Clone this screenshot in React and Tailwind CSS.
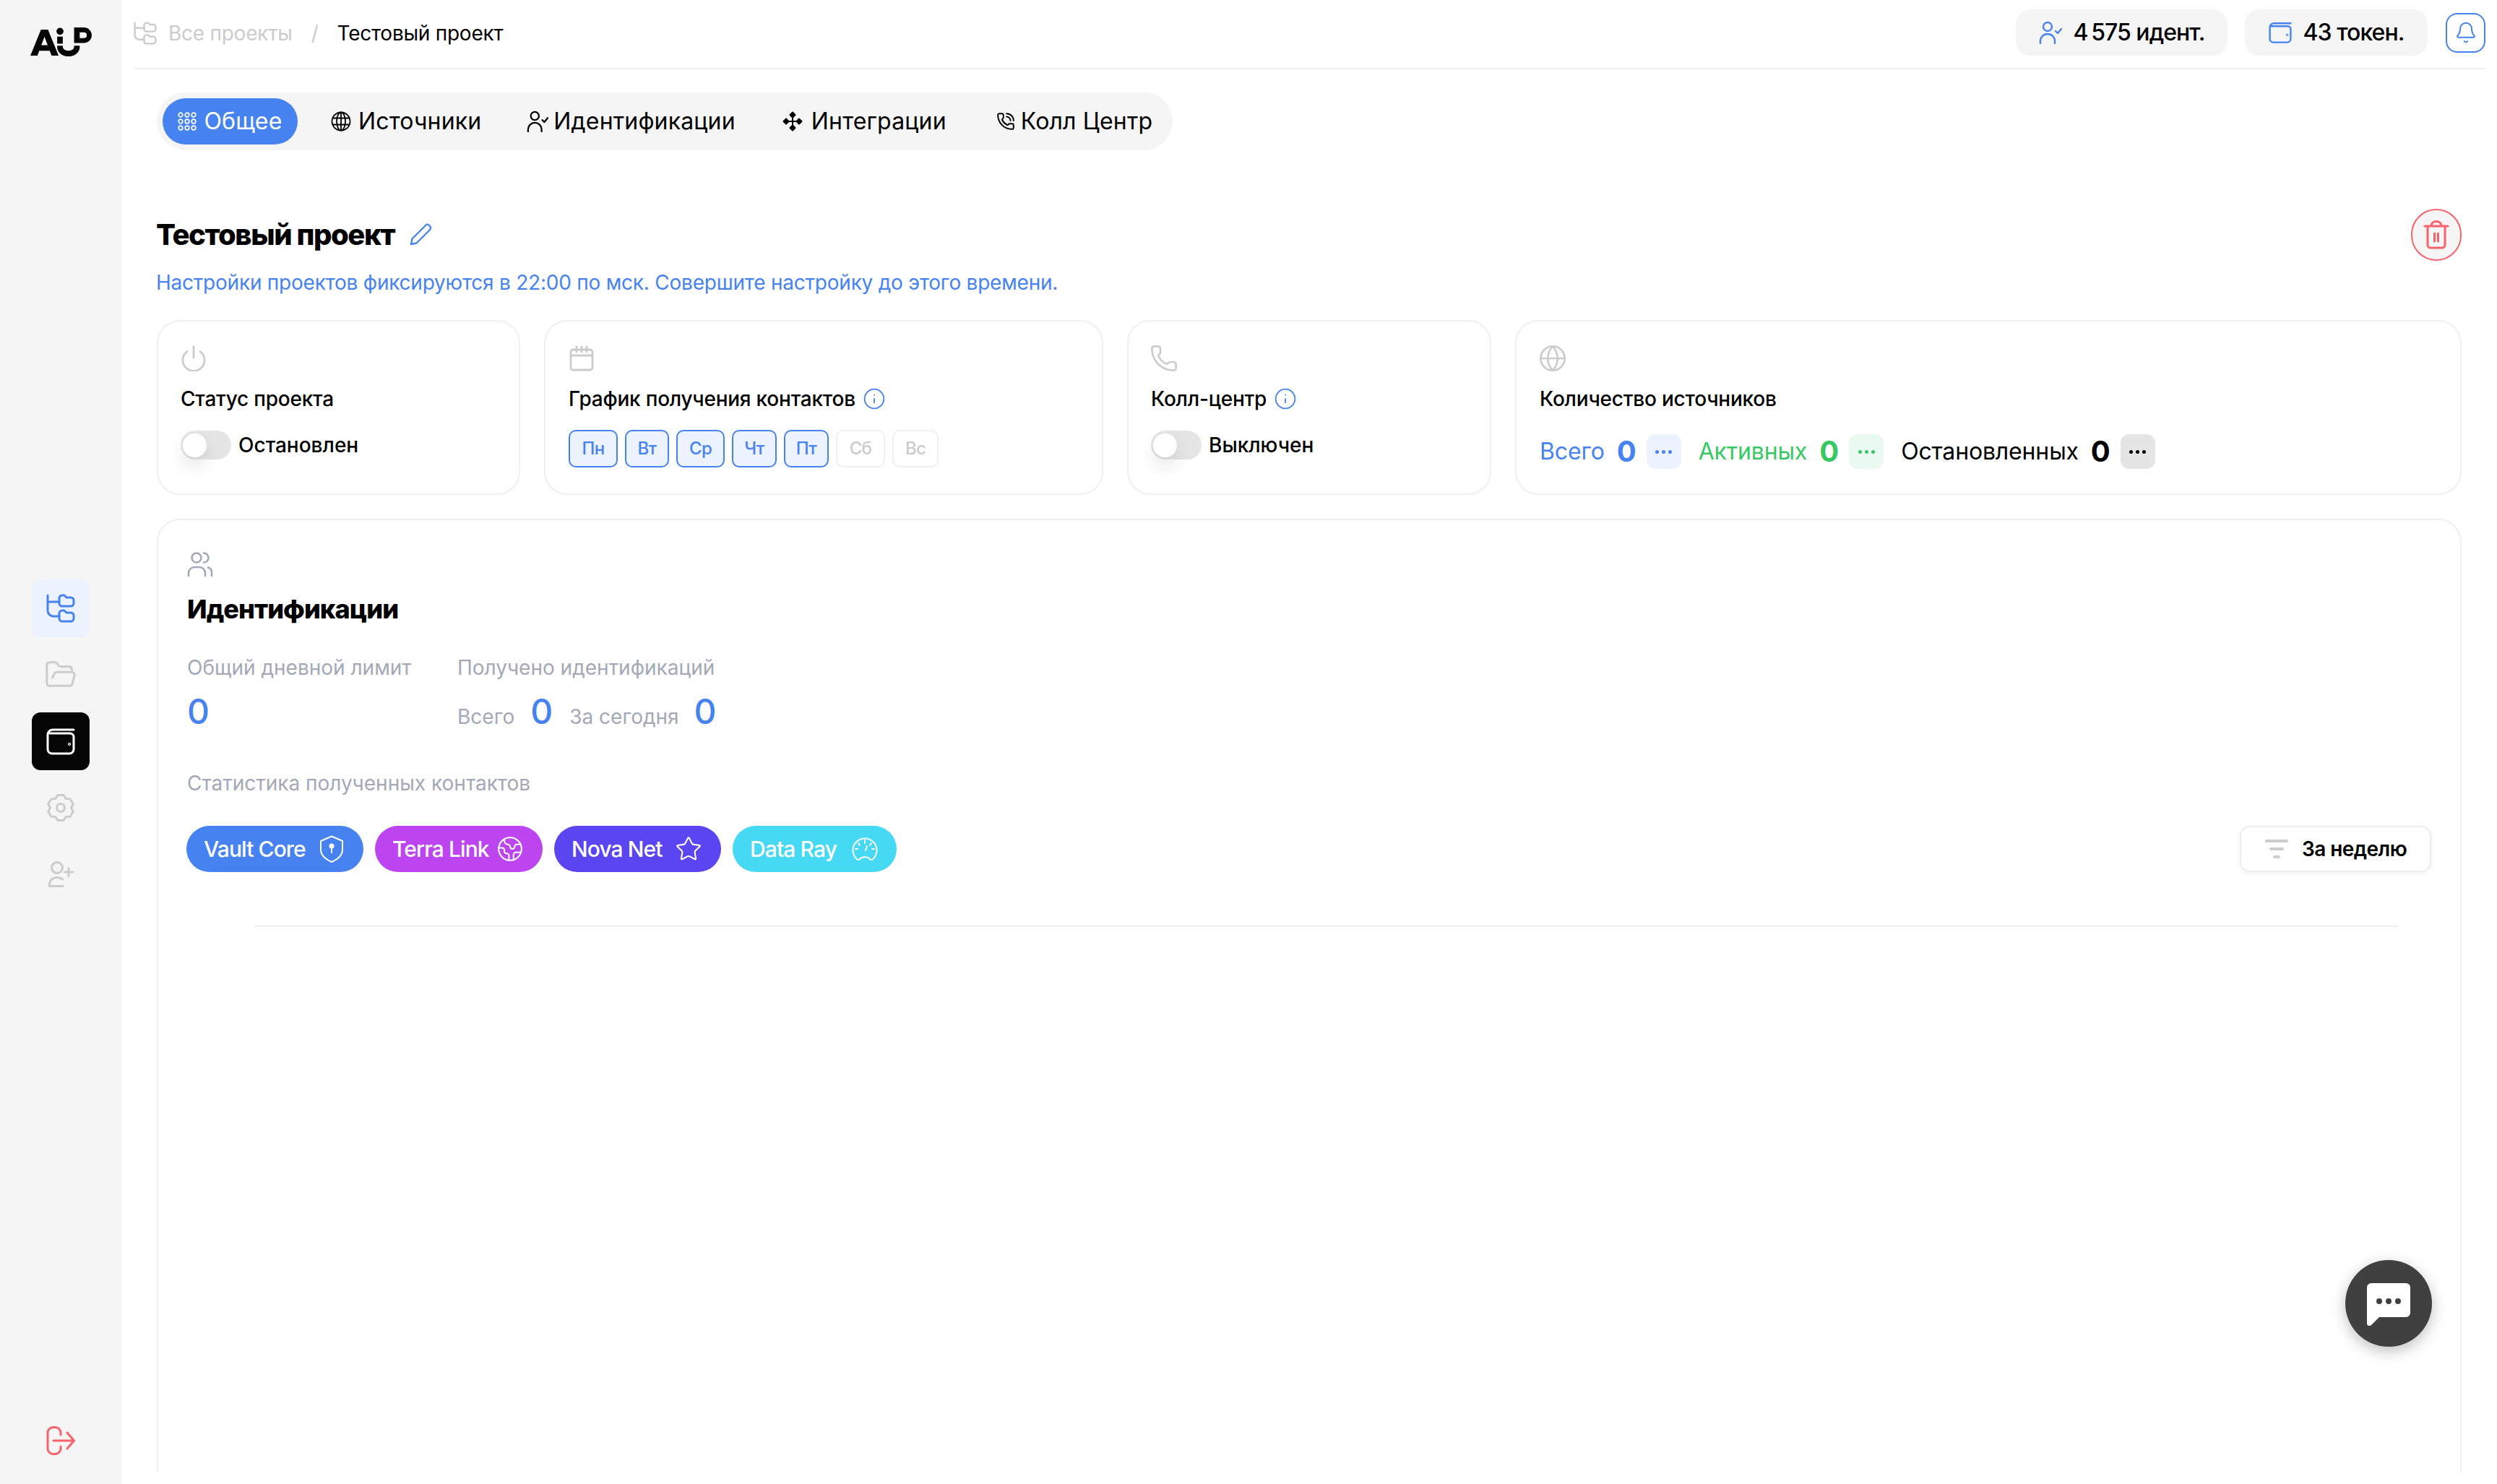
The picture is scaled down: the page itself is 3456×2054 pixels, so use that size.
import React from "react";
import { Bell, Earth, FolderOpen, Globe, Info, Phone, PhoneCall, Star } from "lucide-react";

const Logo = () => (
  <svg width="87" height="40" viewBox="0 0 87 41" fill="#050505">
    <path fillRule="evenodd" d="M0 40 15 3h10l15 37H30l-2.6-7H12.6L10 40ZM15.500 25h9L20 13Z" />
    <circle cx="42" cy="5.500" r="5" />
    <rect x="38" y="13" width="8" height="10" />
    <path d="M42 26v2a12 9 0 0 0 24 0v-2" fill="none" stroke="#050505" strokeWidth="8" />
    <path fillRule="evenodd" d="M62 0h14a11 11 0 0 1 0 22H62Zm8 7v8h6a4 4 0 0 0 0-8Z" />
  </svg>
);

const TreeIcon = ({ className }) => (
  <svg className={className} viewBox="0 0 40 40" fill="none" stroke="currentColor" strokeWidth="3" strokeLinecap="round" strokeLinejoin="round">
    <path d="M2 2v21a8 8 0 0 0 8 8h8M2 11h16" />
    <path d="M18 6a4 4 0 0 1 4-4h3l3 3h6a4 4 0 0 1 4 4v4a4 4 0 0 1-4 4H22a4 4 0 0 1-4-4Z" />
    <path d="M18 27a4 4 0 0 1 4-4h3l3 3h6a4 4 0 0 1 4 4v4a4 4 0 0 1-4 4H22a4 4 0 0 1-4-4Z" />
  </svg>
);

const WalletIcon = ({ className }) => (
  <svg className={className} viewBox="0 0 40 40" fill="none" stroke="currentColor" strokeWidth="3" strokeLinecap="round" strokeLinejoin="round">
    <path d="M38 4H9a7 7 0 0 0-7 7v20a6 6 0 0 0 6 6h24a6 6 0 0 0 6-6V14a5 5 0 0 0-5-5H5" />
    <circle cx="32" cy="24" r="0.6" fill="currentColor" />
  </svg>
);

const gearPoints = Array.from({ length: 6 }, (_, i) => {
  const a = (-90 + i * 60) * (Math.PI / 180);
  const d = 13 * (Math.PI / 180);
  const pt = (r, t) => `${(r * Math.cos(t)).toFixed(2)},${(r * Math.sin(t)).toFixed(2)}`;
  return [pt(18, a - d), pt(18, a + d), pt(14.5, a + Math.PI / 6)].join(" ");
}).join(" ");

const GearIcon = ({ className }) => (
  <svg className={className} viewBox="-20 -20 40 40" fill="none" stroke="currentColor" strokeWidth="3" strokeLinejoin="round">
    <polygon points={gearPoints} />
    <circle cx="0" cy="0" r="5.500" />
  </svg>
);

const UserPlusIcon = ({ className }) => (
  <svg className={className} viewBox="0 0 40 40" fill="none" stroke="currentColor" strokeWidth="3" strokeLinecap="round" strokeLinejoin="round">
    <circle cx="15" cy="11" r="7.500" />
    <path d="M4.500 36.500c-1-7 4-12 10.500-12 3 0 5.500.8 7.500 2.500M4.500 36.500H23" />
    <path d="M31 11.500v11M25.500 17h11" />
  </svg>
);

const LogoutIcon = ({ className }) => (
  <svg className={className} viewBox="0 0 40 40" fill="none" stroke="currentColor" strokeWidth="3" strokeLinecap="round" strokeLinejoin="round">
    <path d="M20 12V9a7.500 7.500 0 0 0-7.500-7.500h-3A7.500 7.500 0 0 0 2 9v22a7.500 7.500 0 0 0 7.500 7.500h3A7.500 7.500 0 0 0 20 31v-3" />
    <path d="M10 20h28M29 9l9.500 11L29 31" />
  </svg>
);

const GridDots = () => (
  <svg width="26" height="26" viewBox="0 0 26 26" fill="none" stroke="white" strokeWidth="1.700">
    {[4, 13, 22].map((y) => [4, 13, 22].map((x) => <circle key={x + "-" + y} cx={x} cy={y} r="2.800" />))}
  </svg>
);

const GlobeLines = () => (
  <svg width="28" height="28" viewBox="0 0 28 28" fill="none" stroke="black" strokeWidth="1.800">
    <circle cx="14" cy="14" r="12.500" />
    <ellipse cx="14" cy="14" rx="6" ry="12.500" />
    <path d="M14 1.500v25M2.500 9.500h23M2.500 18.500h23" />
  </svg>
);

const UserCheckIcon = ({ className }) => (
  <svg className={className} viewBox="0 0 32 32" fill="none" stroke="currentColor" strokeWidth="2.400" strokeLinecap="round" strokeLinejoin="round">
    <circle cx="12" cy="8" r="6" />
    <path d="M2 31v-3a10 10 0 0 1 20 0v3M23 14l3 3 5-6" />
  </svg>
);

const IntegrationIcon = () => (
  <svg width="30" height="30" viewBox="0 0 30 30" fill="none" stroke="black" strokeWidth="2" strokeLinejoin="round">
    <path d="M15 2.500 18.500 6 15 9.500 11.500 6Z M15 20.500l3.500 3.500-3.500 3.500-3.500-3.500Z M6 11.500 9.500 15 6 18.500 2.500 15Z M24 11.500 27.500 15 24 18.500 20.500 15Z" fill="black" />
    <path d="M15 9v12M9 15h12" />
  </svg>
);

const PencilIcon = () => (
  <svg width="32" height="32" viewBox="0 0 32 32" fill="none" stroke="#4683f0" strokeWidth="2.400" strokeLinecap="round" strokeLinejoin="round">
    <path d="M3 29l1.500-7.500L23 3a3 3 0 0 1 5 0l1 1a3.500 3.500 0 0 1 0 5L10.500 27.500Z" />
  </svg>
);

const PowerIcon = ({ className }) => (
  <svg className={className} viewBox="0 0 36 36" fill="none" stroke="currentColor" strokeWidth="2.800" strokeLinecap="round">
    <path d="M18 2v15M9 8.500a15 15 0 1 0 18 0" />
  </svg>
);

const CalendarIcon = ({ className }) => (
  <svg className={className} viewBox="0 0 36 36" fill="none" stroke="currentColor" strokeWidth="2.800" strokeLinecap="round" strokeLinejoin="round">
    <rect x="3" y="6" width="30" height="28" rx="3" />
    <path d="M3 14h30M11 2v7M18 2v7M25 2v7" />
  </svg>
);

const UsersIcon = ({ className }) => (
  <svg className={className} viewBox="0 0 36 36" fill="none" stroke="currentColor" strokeWidth="2.600" strokeLinecap="round">
    <circle cx="13" cy="9" r="6.500" />
    <path d="M23 2.500a6.500 6.500 0 0 1 0 13M2 34v-4a8 8 0 0 1 8-8h7a8 8 0 0 1 8 8v4M29 22.500a7 7 0 0 1 5 7V34" />
  </svg>
);

const TrashIcon = () => (
  <svg width="36" height="40" viewBox="0 0 36 40" fill="none" stroke="#f8636b" strokeWidth="3" strokeLinecap="round" strokeLinejoin="round">
    <path d="M2 8h32M11 8V7a7 5.500 0 0 1 14 0v1M6 8v26a4 4 0 0 0 4 4h16a4 4 0 0 0 4-4V8M15.500 18v11M20.500 18v11" />
  </svg>
);

const ShieldIcon = () => (
  <svg width="36" height="38" viewBox="0 0 36 38" fill="none" stroke="white" strokeWidth="2">
    <path d="M18 1.500 33 8v12c0 7-6 13-15 17C9 33 3 27 3 20V8Z" strokeLinejoin="round" />
    <circle cx="18" cy="15" r="2.500" fill="white" />
    <path d="M18 16v8" strokeLinecap="round" />
  </svg>
);

const GaugeIcon = () => (
  <svg width="36" height="36" viewBox="0 0 36 36" fill="none" stroke="white" strokeWidth="2" strokeLinecap="round">
    <path d="M8 33A16.500 16.500 0 1 1 28 33" />
    <path d="M10 33a10.500 10.500 0 0 1 16 0M18 6v4M9 10l2 3M27 10l-2 3M5 18h3M31 18h-3M21 14l-2 6" />
  </svg>
);

const ChatIcon = () => (
  <svg width="60" height="60" viewBox="0 0 60 60">
    <path d="M0 6a6 6 0 0 1 6-6h48a6 6 0 0 1 6 6v35a6 6 0 0 1-6 6H17L6 58c-2 2-6 1-6-2Z" fill="white" />
    <circle cx="17" cy="25" r="4" fill="#404040" />
    <circle cx="30" cy="25" r="4" fill="#404040" />
    <circle cx="43" cy="25" r="4" fill="#404040" />
  </svg>
);

const Dots = ({ className }) => (
  <div className={`w-[48px] h-[48px] rounded-[12px] flex items-center justify-center gap-[4px] ${className}`}>
    <span className="w-[5px] h-[5px] rounded-full bg-current" />
    <span className="w-[5px] h-[5px] rounded-full bg-current" />
    <span className="w-[5px] h-[5px] rounded-full bg-current" />
  </div>
);

const Toggle = () => (
  <div className="w-[70px] h-[40px] rounded-full bg-[#e5e5e5] flex items-center pl-[3px]">
    <div className="w-[33px] h-[33px] rounded-full bg-white shadow-[0_12px_24px_rgba(0,0,0,0.1)]" />
  </div>
);

const days = [
  { label: "Пн", on: true, w: "w-[68px]" },
  { label: "Вт", on: true, w: "w-[61px]" },
  { label: "Ср", on: true, w: "w-[67px]" },
  { label: "Чт", on: true, w: "w-[62px]" },
  { label: "Пт", on: true, w: "w-[62px]" },
  { label: "Сб", on: false, w: "w-[68px]" },
  { label: "Вс", on: false, w: "w-[64px]" },
];

const sources = [
  { label: "Vault Core", bg: "bg-[#4683f0]", icon: <ShieldIcon />, w: "w-[245px]" },
  { label: "Terra Link", bg: "bg-[#bd45ef]", icon: <Earth size={38} strokeWidth={1.300} />, w: "w-[232px]" },
  { label: "Nova Net", bg: "bg-[#5b45f0]", icon: <Star size={38} strokeWidth={1.300} />, w: "w-[231px]" },
  { label: "Data Ray", bg: "bg-[#45d9f3]", icon: <GaugeIcon />, w: "w-[227px]" },
];

const Card = ({ className, children }) => (
  <div className={`h-[242px] rounded-[32px] border-2 border-[#f0f0f0] pt-[33px] ${className}`}>{children}</div>
);

const CardTitle = ({ children }) => (
  <div className="flex items-center gap-[10px] h-[36px] mt-[20px] text-[28px] font-medium text-black tracking-[-0.008em]">{children}</div>
);

const Count = ({ label, color, dots }) => (
  <div className={`flex items-center ${color}`}>
    <span className="text-[32px] tracking-[-0.005em]">{label}</span>
    <span className="text-[40px] font-bold ml-[17px]">0</span>
    <Dots className={`ml-[14px] ${dots}`} />
  </div>
);

const App = () => {
  return (
    <div className="relative flex w-[3456px] h-[2054px] overflow-hidden bg-white font-[family-name:Inter,sans-serif] text-black">
      {/* sidebar */}
      <div className="w-[168px] shrink-0 bg-[#f5f5f5] flex flex-col items-center justify-between pt-[38px] pb-[40px]">
        <Logo />
        <div className="flex flex-col gap-[12px]">
          <div className="w-[80px] h-[80px] rounded-[12px] bg-[#ecf2fe] flex items-center justify-center text-[#4683f0]">
            <TreeIcon className="w-[40px] h-[40px]" />
          </div>
          <div className="w-[80px] h-[80px] flex items-center justify-center text-[#cccccc]">
            <FolderOpen size={46} strokeWidth={1.600} />
          </div>
          <div className="w-[80px] h-[80px] rounded-[12px] bg-[#050505] flex items-center justify-center text-white">
            <WalletIcon className="w-[40px] h-[40px]" />
          </div>
          <div className="w-[80px] h-[80px] flex items-center justify-center text-[#cccccc]">
            <GearIcon className="w-[40px] h-[40px]" />
          </div>
          <div className="w-[80px] h-[80px] flex items-center justify-center text-[#cccccc]">
            <UserPlusIcon className="w-[40px] h-[40px]" />
          </div>
        </div>
        <LogoutIcon className="w-[40px] h-[40px] text-[#f8636b]" />
      </div>

      {/* main */}
      <div className="flex-1 flex flex-col h-[2037px] overflow-hidden">
        <div className="h-[96px] shrink-0 ml-[17px] mr-[16px] border-b-2 border-[#f0f0f0] flex items-center justify-between pb-[4px]">
          <div className="mt-[2px] flex items-center text-[28px] tracking-[-0.009em]">
            <TreeIcon className="w-[32px] h-[32px] text-[#cccccc]" />
            <span className="ml-[16px] text-[#cccccc]">Все проекты</span>
            <span className="ml-[26px] text-[#cccccc]">/</span>
            <span className="ml-[26px]">Тестовый проект</span>
          </div>
          <div className="flex items-center text-[32px] font-medium tracking-[-0.03em]">
            <div className="w-[293px] h-[64px] rounded-[20px] bg-[#f5f5f5] flex items-center justify-center gap-[16px]">
              <UserCheckIcon className="w-[32px] h-[32px] text-[#4683f0]" />
              <span>4{"\u2009"}575 идент.</span>
            </div>
            <div className="ml-[24px] w-[253px] h-[64px] rounded-[20px] bg-[#f5f5f5] flex items-center justify-center gap-[16px]">
              <WalletIcon className="w-[32px] h-[32px] text-[#4683f0]" />
              <span>43 токен.</span>
            </div>
            <div className="ml-[25px] w-[55px] h-[55px] rounded-[16px] border-2 border-[#4683f0] flex items-center justify-center text-[#4683f0]">
              <Bell size={32} strokeWidth={1.500} />
            </div>
          </div>
        </div>

        <div className="flex-1 overflow-hidden pl-[49px] pr-[49px]">
          {/* tabs */}
          <div className="mt-[32px] w-[1406px] h-[80px] rounded-full bg-[#f5f5f5] flex items-center pl-[8px] text-[32px] tracking-[0.005em]">
            <div className="w-[187px] h-[64px] rounded-full bg-[#4683f0] text-white flex items-center justify-center gap-[10px]">
              <GridDots />
              <span>Общее</span>
            </div>
            <div className="ml-[46px] flex items-center gap-[10px]">
              <GlobeLines />
              <span>Источники</span>
            </div>
            <div className="ml-[63px] flex items-center gap-[7px]">
              <UserCheckIcon className="w-[30px] h-[30px]" />
              <span>Идентификации</span>
            </div>
            <div className="ml-[64px] flex items-center gap-[11px]">
              <IntegrationIcon />
              <span>Интеграции</span>
            </div>
            <div className="ml-[69px] flex items-center gap-[8px]">
              <PhoneCall size={26} strokeWidth={1.800} />
              <span>Колл Центр</span>
            </div>
          </div>

          {/* title */}
          <div className="mt-[81px] h-[72px] flex items-center justify-between">
            <div className="flex items-center gap-[20px]">
              <h1 className="-ml-[1px] text-[40px] font-extrabold tracking-[-0.036em]">Тестовый проект</h1>
              <PencilIcon />
            </div>
            <div className="w-[70px] h-[72px] rounded-full border-2 border-[#f8636b] bg-[#f5f5f5] flex items-center justify-center">
              <TrashIcon />
            </div>
          </div>
          <p className="-ml-[1px] mt-[10px] h-[40px] leading-[40px] text-[28px] text-[#4683f0] tracking-[-0.008em]">
            Настройки проектов фиксируются в 22:00 по мск. Совершите настройку до этого времени.
          </p>

          {/* cards */}
          <div className="mt-[32px] flex gap-[33px]">
            <Card className="w-[503px] pl-[31px]">
              <PowerIcon className="w-[36px] h-[36px] text-[#cccccc]" />
              <CardTitle>Статус проекта</CardTitle>
              <div className="mt-[25px] flex items-center gap-[10px] text-[28px] font-medium">
                <Toggle />
                <span>Остановлен</span>
              </div>
            </Card>
            <Card className="w-[774px] pl-[32px]">
              <CalendarIcon className="w-[36px] h-[36px] text-[#cccccc]" />
              <CardTitle>
                <span>График получения контактов</span>
                <Info size={32} strokeWidth={1.400} className="text-[#4683f0]" />
              </CardTitle>
              <div className="mt-[25px] flex gap-[10px]">
                {days.map((d) => (
                  <div
                    key={d.label}
                    className={`h-[52px] rounded-[10px] border-2 flex items-center justify-center text-[24px] font-medium tracking-[-0.03em] ${d.w} ${
                      d.on ? "bg-[#ecf2fe] border-[#4683f0] text-[#4683f0]" : "bg-white border-[#f0f0f0] text-[#cccccc]"
                    }`}
                  >
                    {d.label}
                  </div>
                ))}
              </div>
            </Card>
            <Card className="w-[504px] pl-[31px]">
              <Phone size={40} strokeWidth={1.600} className="-m-[2px] text-[#cccccc]" />
              <CardTitle>
                <span>Колл-центр</span>
                <Info size={32} strokeWidth={1.400} className="text-[#4683f0]" />
              </CardTitle>
              <div className="mt-[25px] flex items-center gap-[10px] text-[28px] font-medium">
                <Toggle />
                <span>Выключен</span>
              </div>
            </Card>
            <Card className="flex-1 pl-[32px]">
              <Globe size={40} strokeWidth={1.600} className="-m-[2px] text-[#cccccc]" />
              <CardTitle>Количество источников</CardTitle>
              <div className="mt-[25px] flex items-center gap-[24px]">
                <Count label="Всего" color="text-[#4683f0]" dots="bg-[#ecf2fe]" />
                <Count label="Активных" color="text-[#37c863]" dots="bg-[#eafaf0]" />
                <Count label="Остановленных" color="text-black" dots="bg-[#e5e5e5]" />
              </div>
            </Card>
          </div>

          {/* identifications */}
          <div className="mt-[33px] h-[1500px] rounded-[32px] border-2 border-[#f0f0f0] pl-[40px] pr-[40px] pt-[43px]">
            <UsersIcon className="w-[36px] h-[36px] text-[#a3a9b6]" />
            <h2 className="mt-[22px] h-[44px] leading-[44px] text-[36px] font-extrabold tracking-[-0.026em]">Идентификации</h2>
            <div className="mt-[41px] flex">
              <div className="w-[374px]">
                <div className="h-[36px] leading-[36px] text-[28px] text-[#a3a9b6]">Общий дневной лимит</div>
                <div className="mt-[19px] h-[48px] leading-[48px] text-[48px] font-medium text-[#4683f0]">0</div>
              </div>
              <div>
                <div className="h-[36px] leading-[36px] text-[28px] text-[#a3a9b6]">Получено идентификаций</div>
                <div className="mt-[19px] flex items-baseline h-[48px] text-[28px] text-[#a3a9b6]">
                  <span>Всего</span>
                  <span className="ml-[22px] text-[48px] leading-[48px] font-medium text-[#4683f0]">0</span>
                  <span className="ml-[23px]">За сегодня</span>
                  <span className="ml-[21px] text-[48px] leading-[48px] font-medium text-[#4683f0]">0</span>
                </div>
              </div>
            </div>
            <div className="mt-[57px] h-[36px] leading-[36px] text-[28px] text-[#a3a9b6]">Статистика полученных контактов</div>
            <div className="mt-[41px] flex items-start justify-between">
              <div className="flex gap-[16px] -ml-[1px]">
                {sources.map((s) => (
                  <div key={s.label} className={`h-[64px] rounded-full pl-[24px] pr-[26px] flex items-center justify-between text-white text-[30px] font-medium tracking-[-0.03em] ${s.bg} ${s.w}`}>
                    <span>{s.label}</span>
                    {s.icon}
                  </div>
                ))}
              </div>
              <div className="w-[265px] h-[64px] rounded-[14px] border-2 border-[#eeeeee] shadow-[0_2px_6px_rgba(0,0,0,0.06)] flex items-center pl-[33px] gap-[19px]">
                <div className="flex flex-col items-center gap-[7px]">
                  <span className="w-[32px] h-[4px] rounded-full bg-[#cccccc]" />
                  <span className="w-[20px] h-[4px] rounded-full bg-[#cccccc]" />
                  <span className="w-[10px] h-[4px] rounded-full bg-[#cccccc]" />
                </div>
                <span className="text-[28px] font-semibold tracking-[-0.02em]">За неделю</span>
              </div>
            </div>
            <div className="mt-[74px] ml-[93px] w-[2968px] h-[2px] bg-[#f0f0f0]" />
          </div>
        </div>
      </div>

      {/* chat button */}
      <div className="absolute left-[3246px] top-[1744px] w-[120px] h-[120px] rounded-full bg-[#404040] shadow-[0_6px_20px_rgba(0,0,0,0.25)] flex items-center justify-center pt-[4px]">
        <ChatIcon />
      </div>
    </div>
  );
};

export default App;
